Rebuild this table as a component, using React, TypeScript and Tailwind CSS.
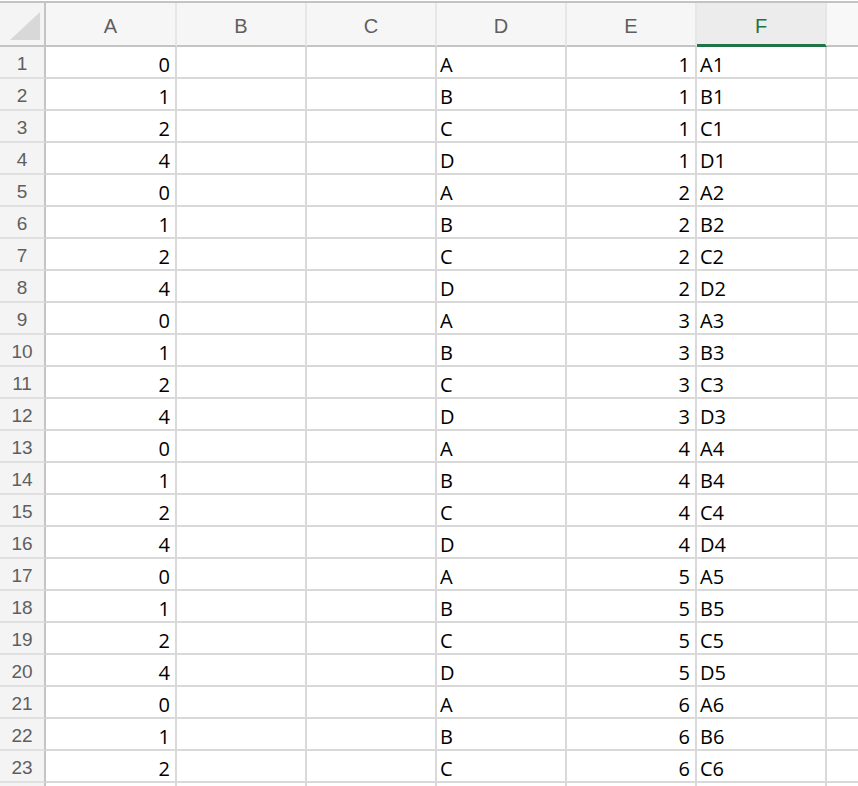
import React from "react";

const colLetters = ["A", "B", "C", "D", "E", "F"];
const aVals = ["0", "1", "2", "4"];
const dVals = ["A", "B", "C", "D"];

export default function App() {
  const rows = Array.from({ length: 23 }, (_, i) => i + 1);
  return (
    <div className="w-[858px] h-[786px] overflow-hidden bg-white" style={{ fontFamily: "'Open Sans', sans-serif" }}>
      <div className="h-[1px] bg-white" />
      <div className="h-[2px] bg-[#c3c3c3]" />
      {/* header row */}
      <div className="flex h-[44px]">
        <div className="w-[46px] shrink-0 h-full bg-[#f4f4f4] border-r-2 border-b-2 border-r-[#c4c4c4] border-b-[#c4c4c4] relative">
          <svg className="absolute left-0 top-0" width="44" height="42" viewBox="0 0 44 42">
            <polygon points="10,37 40,37 40,9" fill="#d8d8d8" />
          </svg>
        </div>
        {colLetters.map((c, i) => {
          const active = c === "F";
          return (
            <div
              key={c}
              className={
                (i === 0 ? "w-[131px] " : "w-[130px] ") +
                "shrink-0 h-full overflow-hidden text-center leading-[46px] text-[20px] border-r-2 border-r-[#e6e6e6] " +
                (active
                  ? "bg-[#ececec] text-[#217346] border-b-[3px] border-b-[#217346]"
                  : "bg-[#f6f6f6] text-[#5f5f5f] border-b-2 border-b-[#c4c4c4]")
              }
              style={{ fontFamily: "'Liberation Sans', Arial, sans-serif" }}
            >
              {c}
            </div>
          );
        })}
        <div className="flex-1 h-full bg-[#f8f8f8] border-b-2 border-b-[#c4c4c4]" />
      </div>
      {rows.map((r) => {
        const idx = (r - 1) % 4;
        const e = String(Math.ceil(r / 4));
        const cells = [aVals[idx], "", "", dVals[idx], e, dVals[idx] + e];
        const align = ["right", "left", "left", "left", "right", "left"];
        return (
          <div key={r} className="flex h-[32px]">
            <div
              className="w-[46px] shrink-0 h-full overflow-hidden bg-[#f4f4f4] border-r-2 border-r-[#c4c4c4] border-b-2 border-b-[#e0e0e0] text-center text-[19px] leading-[34px] text-[#5f5f5f]"
              style={{ fontFamily: "'Liberation Sans', Arial, sans-serif" }}
            >
              {r}
            </div>
            {cells.map((v, i) => (
              <div
                key={i}
                className={
                  (i === 0 ? "w-[131px] " : "w-[130px] ") +
                  "shrink-0 h-full overflow-hidden border-r-2 border-b-2 border-[#d9d9d9] text-[20px] leading-[35px] text-black " +
                  (align[i] === "right" ? "text-right pr-[5px]" : "text-left pl-[3px]")
                }
              >
                {v}
              </div>
            ))}
            <div className="flex-1 h-full border-b-2 border-[#d9d9d9]" />
          </div>
        );
      })}
      <div className="flex h-[32px]">
        <div className="w-[46px] shrink-0 h-full bg-[#f4f4f4] border-r-2 border-r-[#c4c4c4]" />
        {colLetters.map((c, i) => (
          <div key={c} className={(i === 0 ? "w-[131px] " : "w-[130px] ") + "shrink-0 h-full border-r-2 border-[#d9d9d9]"} />
        ))}
      </div>
    </div>
  );
}
